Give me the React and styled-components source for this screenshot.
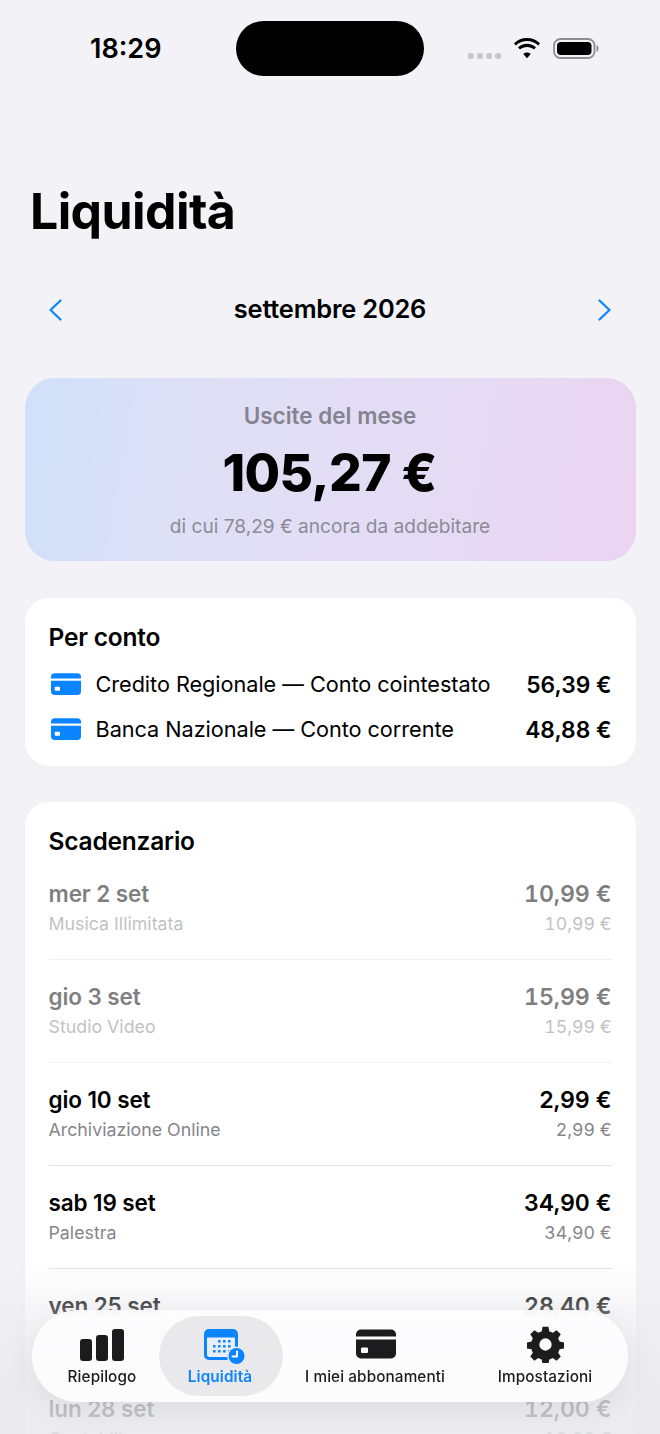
import React from "react";
import styled, { createGlobalStyle } from "styled-components";

const Global = createGlobalStyle`
  html, body { margin: 0; padding: 0; background: #f2f2f7; }
  body { font-family: Inter, "Liberation Sans", sans-serif; color: #000; -webkit-font-smoothing: antialiased; }
`;
const Screen = styled.div`position: relative; width: 660px; height: 1434px; overflow: hidden; background: #f2f2f7;`;
const StatusBar = styled.div`display: flex; align-items: flex-start; height: 55px; padding: 21px 0 0 90px;`;
const Time = styled.span`flex: none; width: 146px; font-size: 27px; font-weight: 600; line-height: 56px;`;
const Island = styled.div`flex: none; width: 188px; height: 55px; border-radius: 28px; background: #000;`;
const StatusIcons = styled.div`display: flex; align-items: flex-start; margin-left: 44px;`;
const Title = styled.h1`margin: 105px 0 0 30px; font-size: 50px; line-height: 60px; font-weight: 700; letter-spacing: -0.6px;`;
const MonthNav = styled.div`display: flex; align-items: center; justify-content: space-between; margin: 49px 49px 0 49px; height: 40px;`;
const MonthLabel = styled.span`font-size: 25.4px; line-height: 38px; padding-bottom: 2px; font-weight: 600; letter-spacing: -0.2px;`;
const Hero = styled.section`margin: 48px 24.5px 0; height: 183px; border-radius: 30px; background: linear-gradient(100deg, #cfe1f9 0%, #dfdff5 30%, #e4dcf4 65%, #ebd4f1 100%); display: flex; flex-direction: column; align-items: center;`;
const HeroLabel = styled.div`margin-top: 24px; font-size: 22.5px; line-height: 28px; font-weight: 600; color: #85838f;`;
const HeroAmount = styled.div`margin: 12px 1px 0 0; font-size: 51.5px; line-height: 60px; font-weight: 800; letter-spacing: -0.6px;`;
const HeroNote = styled.div`margin-top: 11px; font-size: 19.1px; line-height: 26px; color: #8c8a96;`;
const Card = styled.section`margin: ${p => p.$top}px 24.5px 0; background: #fff; border-radius: 24px; padding: 24px 24px 0; box-shadow: 0 2px 12px rgba(0,0,0,.02);`;
const CardTitle = styled.h2`margin: 0; font-size: 24.5px; line-height: 30px; font-weight: 600; letter-spacing: -0.2px;`;
const AccountList = styled.div`margin-top: 17px; display: flex; flex-direction: column; gap: 15px; padding-bottom: 22px;`;
const Account = styled.div`display: flex; align-items: center; height: 30px; padding-left: 2px;`;
const AccountName = styled.span`flex: 1; margin-left: 15px; font-size: 21.7px; letter-spacing: -0.05px;`;
const AccountAmount = styled.span`font-size: 22.8px; font-weight: 600;`;
const RowList = styled.div`margin-top: 1px;`;
const Row = styled.div`display: grid; grid-template-columns: 1fr auto; align-content: start; height: 103px; box-sizing: border-box; padding-top: 21px; border-bottom: 1px solid #e2e2e5; opacity: ${p => (p.$muted ? 0.5 : 1)};`;
const RowDate = styled.span`font-size: 22.5px; line-height: 32px; font-weight: 600; letter-spacing: -0.1px;`;
const RowAmount = styled(RowDate)`font-size: 23.2px; font-variant-numeric: tabular-nums; text-align: right;`;
const RowName = styled.span`font-size: 17.8px; line-height: 28px; color: #85858b;`;
const RowSub = styled(RowName)`font-size: 17.7px; font-variant-numeric: tabular-nums; text-align: right;`;
const Fade = styled.div`position: absolute; left: 0; right: 0; bottom: 0; height: 170px; background: linear-gradient(to bottom, rgba(238,238,243,0) 0%, rgba(232,232,237,.45) 30%, rgba(232,232,237,.8) 75%, rgba(232,232,237,.85) 100%); pointer-events: none;`;
const TabBar = styled.nav`position: absolute; left: 32px; top: 1310px; width: 596px; height: 92px; border-radius: 46px; background: rgba(253,253,254,.92); backdrop-filter: blur(2px); display: flex; align-items: center; box-sizing: border-box; box-shadow: 0 6px 30px rgba(0,0,0,.07);`;
const Tab = styled.div`position: relative; box-sizing: border-box; width: ${p => p.$w}px; margin-left: ${p => p.$ml}px; height: 80px; border-radius: 40px; background: ${p => (p.$active ? "#e9e9eb" : "transparent")}; color: ${p => (p.$active ? "#0a84ff" : "#1c1c1e")}; display: flex; flex-direction: column; align-items: center;`;
const TabIcon = styled.div`height: 46px; padding: 13px 0 0 ${p => p.$shift || 0}px; box-sizing: border-box; display: flex; align-items: flex-start;`;
const TabLabel = styled.span`font-size: 15.3px; line-height: 20px; font-weight: ${p => (p.$active ? 600 : 500)}; margin: 5px ${p => (p.$active ? 2 : 0)}px 0 0; white-space: nowrap; letter-spacing: .1px;`;
const StatusGlyph = styled.svg`flex: none; margin: ${p => p.$top}px 0 0 ${p => p.$left || 0}px;`;

const Dots = () => (
  <StatusGlyph $top={32} width="33" height="6" viewBox="0 0 33 6" fill="#c8c8cb">
    {[0, 9, 18, 27].map(x => <rect key={x} x={x} y="0" width="6" height="6" rx="2" />)}
  </StatusGlyph>
);
const Wifi = () => (
  <StatusGlyph $top={16} $left={12} width="28" height="22" viewBox="0 0 30 22" fill="#000">
    <path d="M15 3.500c4.600 0 8.800 1.800 12 4.700l1.900-2.400C25.100 2.300 20.300.3 15 .3S4.900 2.300 1.100 5.800L3 8.200C6.200 5.300 10.400 3.500 15 3.500z" />
    <path d="M15 9.800c2.900 0 5.500 1.100 7.600 2.900l2-2.400C22 7.900 18.700 6.500 15 6.500s-7 1.400-9.600 3.800l2 2.400c2.100-1.800 4.700-2.900 7.600-2.900z" />
    <path d="M15 15.800c-1.500 0-2.900.6-4 1.500l4 4.700 4-4.700c-1.100-.9-2.500-1.500-4-1.500z" />
  </StatusGlyph>
);
const Battery = () => (
  <StatusGlyph $top={17} $left={12} width="46" height="21" viewBox="0 0 46 21">
    <rect x="1" y="1" width="40.500" height="19" rx="6.500" fill="none" stroke="#8e8e92" strokeWidth="1.800" />
    <rect x="4" y="4" width="34.500" height="13" rx="4" fill="#000" />
    <path d="M43.500 7v7c1.300-.4 2-1.800 2-3.500S44.800 7.400 43.500 7z" fill="#8e8e92" />
  </StatusGlyph>
);
const Chevron = ({ left }) => (
  <svg width="13" height="22" viewBox="0 0 13 22" fill="none" stroke="#0a84ff" strokeWidth="2.200" strokeLinecap="round" strokeLinejoin="round">
    <path d={left ? "M11.500 1.500 1.500 11l10 9.500" : "M1.500 1.500l10 9.500-10 9.500"} />
  </svg>
);
const CardGlyph = ({ w = 30, h = 22, color, hole = "#fff" }) => (
  <svg width={w} height={h} viewBox="0 0 40 29">
    <path d="M5 0h30a5 5 0 0 1 5 5v2H0V5a5 5 0 0 1 5-5zM0 10h40v14a5 5 0 0 1-5 5H5a5 5 0 0 1-5-5z" fill={color} />
    <rect x="5" y="18" width="7" height="5.500" rx="1.200" fill={hole} />
  </svg>
);
const BarsIcon = () => (
  <svg width="44" height="32" viewBox="0 0 44 32" fill="#1c1c1e">
    <rect x="0" y="10" width="12" height="22" rx="3" />
    <rect x="16" y="6" width="12" height="26" rx="3" />
    <rect x="32" y="0" width="12" height="32" rx="3" />
  </svg>
);
const CalendarIcon = () => (
  <svg width="42" height="36" viewBox="0 0 42 36">
    <rect x="0" y="0" width="34" height="31" rx="5" fill="#0a84ff" />
    <path d="M3 8.500h28v17a2.500 2.500 0 0 1-2.500 2.500h-23A2.500 2.500 0 0 1 3 25.500z" fill="#e8eef8" />
    <g fill="#0a84ff">
      {[[14, 11], [19, 11], [24, 11], [9, 16], [14, 16], [19, 16], [24, 16], [9, 21], [14, 21], [19, 21], [24, 21]].map(([x, y]) => (
        <rect key={x + "-" + y} x={x} y={y} width="2.600" height="2.600" rx=".6" />
      ))}
    </g>
    <circle cx="32.500" cy="27" r="9.500" fill="#e9e9eb" />
    <circle cx="32.500" cy="27" r="8" fill="#0a84ff" />
    <path d="M33 22.500v5h-4.500" fill="none" stroke="#fff" strokeWidth="1.900" strokeLinecap="round" strokeLinejoin="round" />
  </svg>
);
const GearIcon = () => (
  <svg width="37" height="37" viewBox="0 0 24 24" fill="#1c1c1e" style={{ marginTop: -3 }}>
    <path fillRule="evenodd" d="M13.900.5l.6 3a8.800 8.800 0 0 1 2.200.9l2.500-1.700 2.700 2.700-1.700 2.500c.4.700.7 1.400.9 2.200l3 .6v3.800l-3 .6a8.800 8.800 0 0 1-.9 2.200l1.700 2.500-2.700 2.700-2.500-1.700c-.7.400-1.400.7-2.200.9l-.6 3h-3.800l-.6-3a8.800 8.800 0 0 1-2.200-.9l-2.500 1.700-2.700-2.700 1.700-2.500a8.800 8.800 0 0 1-.9-2.200l-3-.6v-3.800l3-.6c.2-.8.5-1.500.9-2.200L2.100 5.400l2.700-2.700 2.500 1.700c.7-.4 1.400-.7 2.200-.9l.6-3zM12 8a4 4 0 1 0 0 8 4 4 0 0 0 0-8z" />
  </svg>
);

const rows = [
  ["mer 2 set", "Musica Illimitata", "10,99 €", "10,99 €", true],
  ["gio 3 set", "Studio Video", "15,99 €", "15,99 €", true],
  ["gio 10 set", "Archiviazione Online", "2,99 €", "2,99 €"],
  ["sab 19 set", "Palestra", "34,90 €", "34,90 €"],
  ["ven 25 set", "Assicurazione Casa", "28,40 €", "28,40 €"],
  ["lun 28 set", "Contabili", "12,00 €", "12,00 €"],
];

export default function App() {
  return (
    <Screen>
      <Global />
      <StatusBar>
        <Time>18:29</Time>
        <Island />
        <StatusIcons><Dots /><Wifi /><Battery /></StatusIcons>
      </StatusBar>
      <Title>Liquidità</Title>
      <MonthNav><Chevron left /><MonthLabel>settembre 2026</MonthLabel><Chevron /></MonthNav>
      <Hero>
        <HeroLabel>Uscite del mese</HeroLabel>
        <HeroAmount>105,27 €</HeroAmount>
        <HeroNote>di cui 78,29 € ancora da addebitare</HeroNote>
      </Hero>
      <Card $top={37}>
        <CardTitle>Per conto</CardTitle>
        <AccountList>
          <Account><CardGlyph color="#0a84ff" /><AccountName>Credito Regionale — Conto cointestato</AccountName><AccountAmount>56,39 €</AccountAmount></Account>
          <Account><CardGlyph color="#0a84ff" /><AccountName>Banca Nazionale — Conto corrente</AccountName><AccountAmount>48,88 €</AccountAmount></Account>
        </AccountList>
      </Card>
      <Card $top={36}>
        <CardTitle>Scadenzario</CardTitle>
        <RowList>
          {rows.map(([d, n, a, s, m]) => (
            <Row key={d} $muted={m}><RowDate>{d}</RowDate><RowAmount>{a}</RowAmount><RowName>{n}</RowName><RowSub>{s}</RowSub></Row>
          ))}
        </RowList>
      </Card>
      <Fade />
      <TabBar>
        <Tab $w={116} $ml={12}><TabIcon><BarsIcon /></TabIcon><TabLabel>Riepilogo</TabLabel></Tab>
        <Tab $w={124} $ml={-1} $active><TabIcon $shift={7}><CalendarIcon /></TabIcon><TabLabel $active>Liquidità</TabLabel></Tab>
        <Tab $w={160} $ml={12}><TabIcon $shift={1}><CardGlyph w={40} h={30} color="#1c1c1e" hole="#fdfdfe" /></TabIcon><TabLabel>I miei abbonamenti</TabLabel></Tab>
        <Tab $w={110} $ml={35}><TabIcon><GearIcon /></TabIcon><TabLabel>Impostazioni</TabLabel></Tab>
      </TabBar>
    </Screen>
  );
}
